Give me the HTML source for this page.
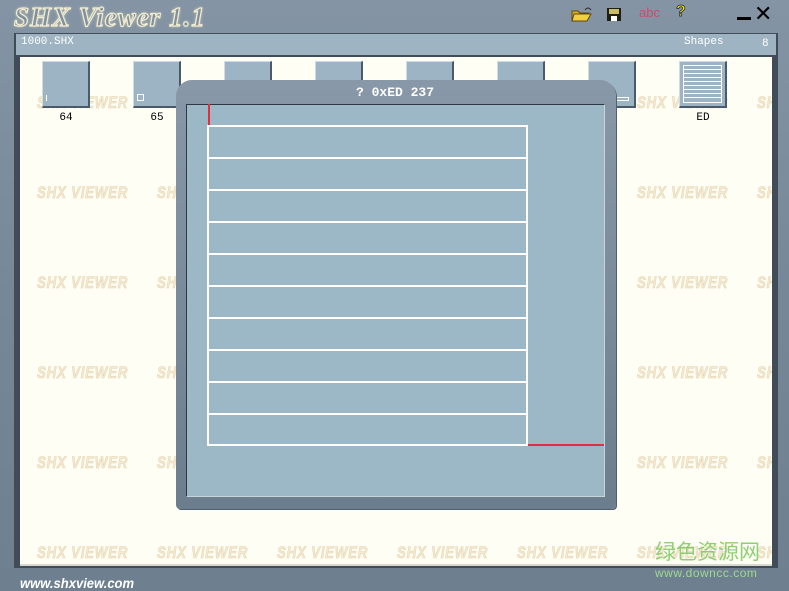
<!DOCTYPE html>
<html><head><meta charset="utf-8"><style>
*{margin:0;padding:0;box-sizing:border-box}
body{width:789px;height:591px;overflow:hidden;position:relative;background:linear-gradient(#8494a4,#768898 50%,#6e8090);font-family:"Liberation Sans",sans-serif}
.a{position:absolute}
.wm{position:absolute;font:italic bold 17px "Liberation Sans",sans-serif;color:#f4ead2;-webkit-text-stroke:0.6px #e6d2b0;transform:scaleX(0.78);transform-origin:left top;letter-spacing:1px;white-space:nowrap}
.th{position:absolute;top:61px;width:48px;height:47px;background:#9cb4c4;border:1px solid #d0dce4;border-right:2px solid #4a5a68;border-bottom:2px solid #4a5a68}
.lb{position:absolute;top:112px;font:11px "Liberation Mono",monospace;width:48px;text-align:center;color:#000}
</style></head><body>
<div class="a" style="left:14px;top:2px;font:italic bold 27px 'Liberation Serif',serif;color:#7f90a0;-webkit-text-stroke:1.2px #f2ecd0;letter-spacing:1px;text-shadow:0 0 3px #f0e8c0">SHX Viewer 1.1</div>
<svg class="a" style="left:571px;top:6px" width="22" height="16"><path d="M1 5h6l2 2h9l-3 8H1z" fill="#d8b020" stroke="#604810"/><path d="M3 8h17l-4 7H1z" fill="#f0d040" stroke="#604810"/><path d="M14 4q3-4 6 0" stroke="#333" fill="none"/></svg>
<svg class="a" style="left:606px;top:7px" width="16" height="15"><rect x="1" y="1" width="14" height="13" fill="#202010"/><rect x="3" y="2" width="10" height="5" fill="#c8c060"/><rect x="5" y="9" width="6" height="5" fill="#fff"/></svg>
<div class="a" style="left:639px;top:5px;font:13px 'Liberation Sans';color:#d04870">abc</div>
<div class="a" style="left:676px;top:3px;font:bold 16px 'Liberation Sans';color:#f0e020;-webkit-text-stroke:0.7px #222">?</div>
<div class="a" style="left:737px;top:17px;width:14px;height:3px;background:#000"></div>
<div class="a" style="left:754px;top:4px;font:22px 'DejaVu Sans';color:#000;line-height:22px">✕</div>
<div class="a" style="left:14px;top:33px;width:764px;height:535px;background:#404c58"></div>
<div class="a" style="left:16px;top:34px;width:760px;height:21px;background:#9eb4c2"></div>
<div class="a" style="left:21px;top:36px;font:11px 'Liberation Mono',monospace;color:#fff">1000.SHX</div>
<div class="a" style="left:684px;top:36px;font:11px 'Liberation Mono',monospace;color:#fff">Shapes</div>
<div class="a" style="left:762px;top:38px;font:11px 'Liberation Mono',monospace;color:#fff">8</div>
<div class="a" style="left:20px;top:57px;width:752px;height:509px;background:#fefef4;overflow:hidden;border-bottom:2px solid #d8d8d0">
</div>
<div class="a" style="left:20px;top:57px;width:752px;height:509px;overflow:hidden">
<div style="position:absolute;left:-20px;top:-57px;width:789px;height:591px">
<div class="wm" style="left:37px;top:93px">SHX VIEWER</div><div class="wm" style="left:157px;top:93px">SHX VIEWER</div><div class="wm" style="left:637px;top:93px">SHX VIEWER</div><div class="wm" style="left:757px;top:93px">SHX VIEWER</div>
<div class="wm" style="left:37px;top:183px">SHX VIEWER</div><div class="wm" style="left:157px;top:183px">SHX VIEWER</div><div class="wm" style="left:637px;top:183px">SHX VIEWER</div><div class="wm" style="left:757px;top:183px">SHX VIEWER</div>
<div class="wm" style="left:37px;top:273px">SHX VIEWER</div><div class="wm" style="left:157px;top:273px">SHX VIEWER</div><div class="wm" style="left:637px;top:273px">SHX VIEWER</div><div class="wm" style="left:757px;top:273px">SHX VIEWER</div>
<div class="wm" style="left:37px;top:363px">SHX VIEWER</div><div class="wm" style="left:157px;top:363px">SHX VIEWER</div><div class="wm" style="left:637px;top:363px">SHX VIEWER</div><div class="wm" style="left:757px;top:363px">SHX VIEWER</div>
<div class="wm" style="left:37px;top:453px">SHX VIEWER</div><div class="wm" style="left:157px;top:453px">SHX VIEWER</div><div class="wm" style="left:637px;top:453px">SHX VIEWER</div><div class="wm" style="left:757px;top:453px">SHX VIEWER</div>
<div class="wm" style="left:37px;top:543px">SHX VIEWER</div><div class="wm" style="left:157px;top:543px">SHX VIEWER</div><div class="wm" style="left:277px;top:543px">SHX VIEWER</div><div class="wm" style="left:397px;top:543px">SHX VIEWER</div><div class="wm" style="left:517px;top:543px">SHX VIEWER</div><div class="wm" style="left:637px;top:543px">SHX VIEWER</div><div class="wm" style="left:757px;top:543px">SHX VIEWER</div>
<div class="th" style="left:42px"></div><div class="th" style="left:133px"></div><div class="th" style="left:224px"></div><div class="th" style="left:315px"></div><div class="th" style="left:406px"></div><div class="th" style="left:497px"></div><div class="th" style="left:588px"></div><div class="th" style="left:679px"></div>
<div class="a" style="left:46px;top:95px;width:1px;height:6px;background:#fff"></div>
<div class="a" style="left:137px;top:94px;width:7px;height:7px;border:1px solid #fff"></div>
<div class="a" style="left:616px;top:97px;width:13px;height:4px;border:1px solid #fff"></div>
<svg class="a" style="left:682px;top:64px" width="42" height="40"><g stroke="#fff" fill="none"><rect x="1.5" y="1.5" width="38" height="37"/><path d="M1 5.5h39M1 9.5h39M1 13.5h39M1 17.5h39M1 21.5h39M1 25.5h39M1 29.5h39M1 33.5h39"/></g></svg>
<div class="lb" style="left:42px">64</div><div class="lb" style="left:133px">65</div><div class="lb" style="left:679px">ED</div>
</div></div>
<div class="a" style="left:655px;top:537px;font:21px 'Noto Sans CJK SC',sans-serif;color:#7cc860;opacity:.85;line-height:28px">绿色资源网</div>
<div class="a" style="left:655px;top:566px;font:12px 'Liberation Sans';color:#a0d890;letter-spacing:0.5px">www.downcc.com</div>
<div class="a" style="left:176px;top:80px;width:440px;height:429px;background:linear-gradient(#8898a8,#6c7e8e);border-radius:16px 16px 4px 4px;box-shadow:1px 1px 0 #506070"></div>
<div class="a" style="left:356px;top:85px;font:bold 13px 'Liberation Mono',monospace;color:#fff">? 0xED 237</div>
<div class="a" style="left:186px;top:104px;width:419px;height:393px;background:#9cb8c6;border:1px solid #2c3844;border-right-color:#c8d4dc;border-bottom-color:#c8d4dc"></div>
<div class="a" style="left:208px;top:104px;width:2px;height:22px;background:#e03040"></div>
<div class="a" style="left:527px;top:444px;width:77px;height:2px;background:#e03040"></div>
<svg class="a" style="left:207px;top:125px" width="322" height="322"><g stroke="#fff" stroke-width="2" fill="none"><rect x="1" y="1" width="319" height="319"/><path d="M1 33h319M1 65h319M1 97h319M1 129h319M1 161h319M1 193h319M1 225h319M1 257h319M1 289h319"/></g></svg>
<div class="a" style="left:20px;top:575px;font:italic bold 14px 'Liberation Sans';color:#fff;transform:scaleX(.93);transform-origin:left">www.shxview.com</div>
</body></html>
